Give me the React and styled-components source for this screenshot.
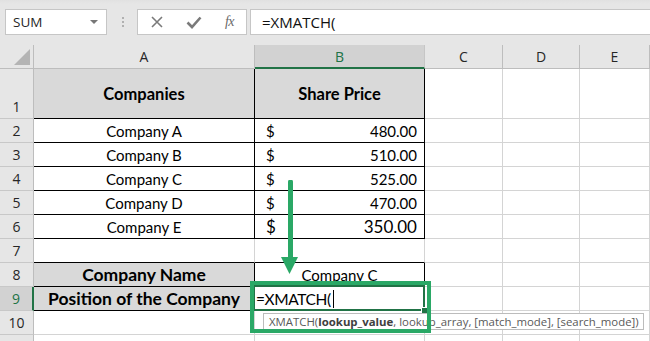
import React from 'react';
import styled, { createGlobalStyle } from 'styled-components';

const GlobalStyle = createGlobalStyle`
  html, body {
    margin: 0;
    padding: 0;
    background: #ffffff;
    overflow: hidden;
  }
  body {
    font-family: 'Lato', 'Noto Sans', sans-serif;
  }
`;

const GREEN_DARK = '#217346';
const GREEN_NOTE = '#2aa866';
const GRID = '#d4d4d4';

const Window = styled.div`
  width: 650px;
  height: 341px;
  overflow: hidden;
  background: #ffffff;
`;

const Toolbar = styled.div`
  display: flex;
  align-items: flex-start;
  height: 45px;
  padding: 9px 0 0 5px;
  box-sizing: border-box;
  background: linear-gradient(#e1e1e1, #e6e6e6 4px);
`;

const NameBox = styled.div`
  display: flex;
  align-items: center;
  justify-content: space-between;
  width: 102px;
  height: 26px;
  box-sizing: border-box;
  padding: 0 8px 0 7px;
  background: #fff;
  border: 1px solid #c6c6c6;
  font-family: 'Open Sans', sans-serif;
  font-size: 13.5px;
  color: #262626;
`;

const Caret = styled.span`
  width: 0;
  height: 0;
  border-left: 4px solid transparent;
  border-right: 4px solid transparent;
  border-top: 4px solid #777;
`;

const Grip = styled.div`
  display: flex;
  flex-direction: column;
  gap: 2px;
  margin: 8px 13px 0 15px;
  span {
    width: 2px;
    height: 2px;
    background: #b0b0b0;
  }
`;

const FxButtons = styled.div`
  display: flex;
  align-items: center;
  justify-content: space-between;
  width: 110px;
  height: 26px;
  box-sizing: border-box;
  padding: 0 12px 0 12px;
  background: #fff;
  border: 1px solid #c6c6c6;
  margin-right: 3px;
`;

const FxLabel = styled.span`
  font-family: 'Liberation Serif', serif;
  font-style: italic;
  font-size: 14px;
  color: #6a6a6a;
  letter-spacing: -0.5px;
`;

const FormulaInput = styled.div`
  flex: 1;
  height: 26px;
  box-sizing: border-box;
  padding-left: 11px;
  display: flex;
  align-items: center;
  background: #fff;
  border: 1px solid #c6c6c6;
  border-right: none;
  font-family: 'Open Sans', sans-serif;
  font-size: 15px;
  color: #111;
`;

const Sheet = styled.div`
  position: relative;
  display: grid;
  grid-template-columns: 34px 221px 170px 78px 77px 1fr;
  grid-template-rows: 24px 50px repeat(10, 24px) 24px;
`;

const Corner = styled.div`
  position: relative;
  background: #e6e6e6;
  border-right: 1px solid #bdbdbd;
  border-bottom: 1px solid #bdbdbd;
  &::after {
    content: '';
    position: absolute;
    right: 3px;
    bottom: 3px;
    width: 0;
    height: 0;
    border-left: 16px solid transparent;
    border-bottom: 16px solid #b4b4b4;
  }
`;

const ColHead = styled.div`
  display: flex;
  align-items: center;
  justify-content: center;
  background: ${(p) => (p.$active ? '#d2d2d2' : '#e6e6e6')};
  border-right: 1px solid ${(p) => (p.$active ? '#c6c6c6' : '#bdbdbd')};
  border-bottom: ${(p) => (p.$active ? `2px solid ${GREEN_DARK}` : '1px solid #bdbdbd')};
  font-family: 'Open Sans', sans-serif;
  font-size: 14px;
  color: ${(p) => (p.$active ? GREEN_DARK : '#262626')};
  padding-top: ${(p) => (p.$active ? '1px' : '0')};
`;

const RowHead = styled.div`
  display: flex;
  align-items: ${(p) => (p.$tall ? 'flex-end' : 'center')};
  justify-content: center;
  padding-bottom: ${(p) => (p.$tall ? '2px' : '0')};
  box-sizing: border-box;
  background: ${(p) => (p.$active ? '#d2d2d2' : '#e6e6e6')};
  border-right: ${(p) => (p.$active ? `2px solid ${GREEN_DARK}` : '1px solid #bdbdbd')};
  border-bottom: 1px solid #c8c8c8;
  font-family: 'Open Sans', sans-serif;
  font-size: 14px;
  color: ${(p) => (p.$active ? GREEN_DARK : '#262626')};
`;

const Cell = styled.div`
  position: relative;
  display: flex;
  align-items: center;
  justify-content: ${(p) => p.$justify || 'center'};
  box-sizing: border-box;
  padding: ${(p) => p.$pad || '0'};
  background: ${(p) => (p.$fill ? '#d9d9d9' : '#fff')};
  border-right: 1px solid ${(p) => (p.$rb ? '#000' : GRID)};
  border-bottom: 1px solid ${(p) => (p.$bb ? '#000' : GRID)};
  font-size: ${(p) => p.$size || '15px'};
  font-weight: ${(p) => (p.$bold ? 700 : 400)};
  color: #000;
  white-space: nowrap;
`;

const ActiveCell = styled(Cell)`
  z-index: 2;
  &::before {
    content: '';
    position: absolute;
    left: -2px;
    top: -2px;
    right: -1px;
    bottom: -1px;
    border: 2px solid ${GREEN_DARK};
    pointer-events: none;
  }
  &::after {
    content: '';
    position: absolute;
    right: -4px;
    bottom: -4px;
    width: 5px;
    height: 5px;
    background: ${GREEN_DARK};
    border: 1px solid #fff;
  }
`;

const EditText = styled.span`
  font-size: 15.5px;
  letter-spacing: -0.4px;
  margin-left: 1px;
`;

const TextCursor = styled.span`
  display: inline-block;
  width: 1px;
  height: 18px;
  margin-left: 2px;
  vertical-align: -3px;
  background: #000;
`;

const Tooltip = styled.div`
  position: absolute;
  left: 263px;
  top: 268px;
  height: 17px;
  box-sizing: border-box;
  padding: 0 4px 0 5px;
  display: flex;
  align-items: center;
  background: #fff;
  border: 1px solid #bcbcbc;
  font-family: 'Open Sans', sans-serif;
  font-size: 11.4px;
  color: #595959;
  white-space: nowrap;
  z-index: 3;
  b {
    font-weight: 700;
    color: #404040;
  }
`;

const Highlight = styled.div`
  position: absolute;
  left: 250px;
  top: 236px;
  width: 181px;
  height: 52px;
  box-sizing: border-box;
  border: 4px solid ${GREEN_NOTE};
  z-index: 4;
  pointer-events: none;
`;

const Arrow = styled.svg`
  position: absolute;
  left: 278px;
  top: 135px;
  z-index: 4;
`;

const Money = ({ value, size }) => (
  <Cell $rb $bb $justify="space-between" $pad="0 7px 0 11px" $size={size}>
    <span>$</span>
    <span>{value}</span>
  </Cell>
);

const companies = [
  ['Company A', '480.00'],
  ['Company B', '510.00'],
  ['Company C', '525.00'],
  ['Company D', '470.00'],
  ['Company E', '350.00'],
];

const Blanks = ({ n = 3 }) =>
  Array.from({ length: n }).map((_, i) => <Cell key={i} />);

export default function App() {
  return (
    <Window>
      <GlobalStyle />
      <Toolbar>
        <NameBox>
          SUM
          <Caret />
        </NameBox>
        <Grip>
          <span />
          <span />
          <span />
        </Grip>
        <FxButtons>
          <svg width="14" height="14" viewBox="0 0 14 14">
            <path d="M2 2 L12 12 M12 2 L2 12" stroke="#7a7a7a" strokeWidth="1.6" fill="none" />
          </svg>
          <svg width="16" height="14" viewBox="0 0 16 14">
            <path d="M1.5 7.5 L6 12 L14.5 2.5" stroke="#7a7a7a" strokeWidth="2.6" fill="none" />
          </svg>
          <FxLabel>fx</FxLabel>
        </FxButtons>
        <FormulaInput>=XMATCH(</FormulaInput>
      </Toolbar>

      <Sheet>
        <Corner />
        <ColHead>A</ColHead>
        <ColHead $active>B</ColHead>
        <ColHead>C</ColHead>
        <ColHead>D</ColHead>
        <ColHead>E</ColHead>

        <RowHead $tall>1</RowHead>
        <Cell $fill $bold $rb $bb $size="16.5px">Companies</Cell>
        <Cell $fill $bold $rb $bb $size="16.5px">Share Price</Cell>
        <Blanks />

        {companies.map(([name, price], i) => (
          <React.Fragment key={name}>
            <RowHead>{i + 2}</RowHead>
            <Cell $rb $bb>{name}</Cell>
            <Money value={price} size={i === 4 ? '17px' : '15px'} />
            <Blanks />
          </React.Fragment>
        ))}

        <RowHead>7</RowHead>
        <Cell $bb />
        <Cell $bb />
        <Blanks />

        <RowHead>8</RowHead>
        <Cell $fill $bold $rb $bb $size="17.5px">Company Name</Cell>
        <Cell $rb $bb>Company C</Cell>
        <Blanks />

        <RowHead $active>9</RowHead>
        <Cell $fill $bold $rb $bb $size="17.5px">Position of the Company</Cell>
        <ActiveCell $justify="flex-start" $rb $bb>
          <EditText>
            =XMATCH(
            <TextCursor />
          </EditText>
        </ActiveCell>
        <Blanks />

        <RowHead>10</RowHead>
        <Cell />
        <Cell />
        <Blanks />

        <RowHead />
        <Cell />
        <Cell />
        <Blanks />

        <Tooltip>
          XMATCH(<b>lookup_value</b>, lookup_array, [match_mode], [search_mode])
        </Tooltip>
        <Highlight />
        <Arrow width="24" height="96" viewBox="0 0 24 96">
          <line x1="12.5" y1="2" x2="12.5" y2="80" stroke={GREEN_NOTE} strokeWidth="5" strokeLinecap="round" />
          <polygon points="3,77 20,77 11.5,94" fill={GREEN_NOTE} />
        </Arrow>
      </Sheet>
    </Window>
  );
}
